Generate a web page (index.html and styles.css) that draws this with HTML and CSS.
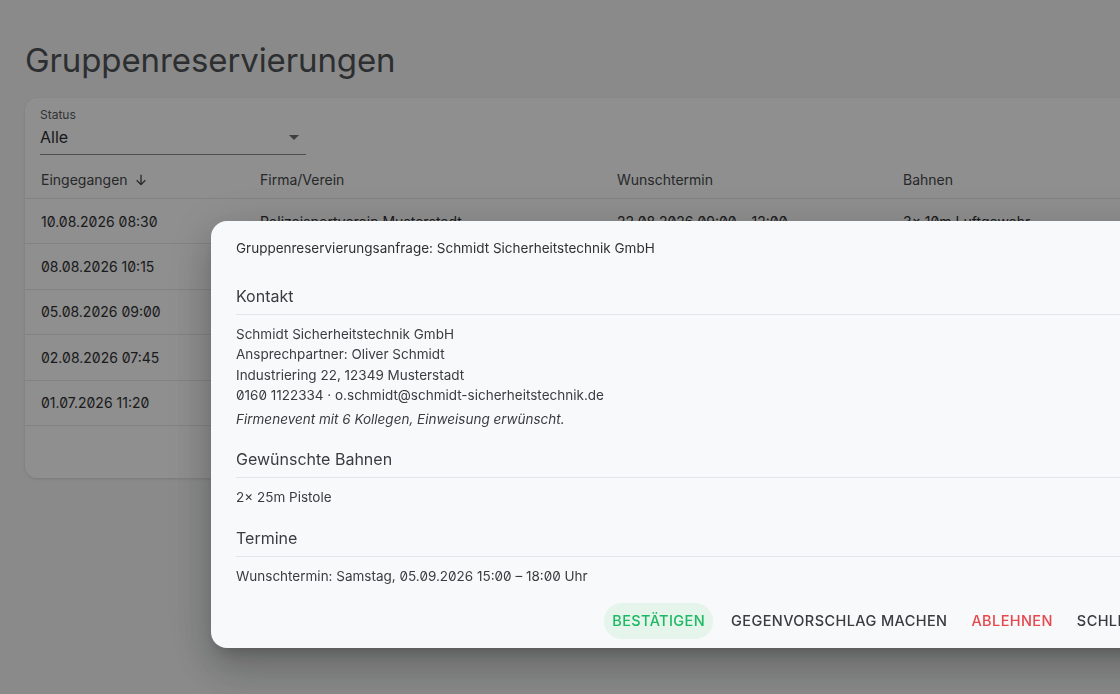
FILE: index.html
```html
<!DOCTYPE html>
<html lang="de">
<head>
<meta charset="utf-8">
<title>Gruppenreservierungen</title>
<link rel="stylesheet" href="styles.css">
</head>
<body>
<div class="page">
  <h1 class="page-title">Gruppenreservierungen</h1>
  <div class="card">
    <div class="filter">
      <div class="select">
        <div class="select-label">Status</div>
        <div class="select-value">Alle<span class="caret"></span></div>
      </div>
    </div>
    <div class="table">
      <div class="row head">
        <div class="cell">Eingegangen <svg class="sort" viewBox="0 0 24 24" width="16" height="16"><path d="M12 4v15M5.5 12.5L12 19l6.5-6.5" fill="none" stroke="currentColor" stroke-width="2"/></svg></div>
        <div class="cell">Firma/Verein</div>
        <div class="cell">Wunschtermin</div>
        <div class="cell">Bahnen</div>
      </div>
      <div class="row">
        <div class="cell">10.08.2026 08:30</div>
        <div class="cell">Polizeisportverein Musterstadt</div>
        <div class="cell">22.08.2026 09:00 – 12:00</div>
        <div class="cell">3× 10m Luftgewehr</div>
      </div>
      <div class="row">
        <div class="cell">08.08.2026 10:15</div>
        <div class="cell">Schützengilde Nord</div>
        <div class="cell">29.08.2026 14:00 – 17:00</div>
        <div class="cell">4× 10m Luftpistole</div>
      </div>
      <div class="row">
        <div class="cell">05.08.2026 09:00</div>
        <div class="cell">Schmidt Sicherheitstechnik GmbH</div>
        <div class="cell">05.09.2026 15:00 – 18:00</div>
        <div class="cell">2× 25m Pistole</div>
      </div>
      <div class="row">
        <div class="cell">02.08.2026 07:45</div>
        <div class="cell">Jagdverein Waldhof</div>
        <div class="cell">12.09.2026 10:00 – 13:00</div>
        <div class="cell">2× 50m Kleinkaliber</div>
      </div>
      <div class="row">
        <div class="cell">01.07.2026 11:20</div>
        <div class="cell">Firmenlauf Team Süd</div>
        <div class="cell">18.07.2026 16:00 – 19:00</div>
        <div class="cell">3× 10m Luftgewehr</div>
      </div>
      <div class="table-foot"></div>
    </div>
  </div>
</div>

<div class="overlay"></div>

<div class="dialog">
  <div class="dialog-title">Gruppenreservierungsanfrage: Schmidt Sicherheitstechnik GmbH</div>
  <div class="section first">
    <div class="section-head">Kontakt</div>
    <div class="section-body">
      <div class="line">Schmidt Sicherheitstechnik GmbH</div>
      <div class="line">Ansprechpartner: Oliver Schmidt</div>
      <div class="line">Industriering 22, 12349 Musterstadt</div>
      <div class="line">0160 1122334 · o.schmidt@schmidt-sicherheitstechnik.de</div>
      <div class="line note">Firmenevent mit 6 Kollegen, Einweisung erwünscht.</div>
    </div>
  </div>
  <div class="section">
    <div class="section-head">Gewünschte Bahnen</div>
    <div class="section-body">
      <div class="line">2× 25m Pistole</div>
    </div>
  </div>
  <div class="section">
    <div class="section-head">Termine</div>
    <div class="section-body">
      <div class="line">Wunschtermin: Samstag, 05.09.2026 15:00 – 18:00 Uhr</div>
    </div>
  </div>
  <div class="actions">
    <button class="btn btn-confirm">Bestätigen</button>
    <button class="btn btn-neutral">Gegenvorschlag machen</button>
    <button class="btn btn-reject">Ablehnen</button>
    <button class="btn btn-neutral">Schließen</button>
  </div>
</div>
</body>
</html>
```

FILE: styles.css
```css
* { box-sizing: border-box; }

html, body {
  margin: 0;
  padding: 0;
  width: 1120px;
  height: 694px;
  overflow: hidden;
}

body {
  background: #f2f3f4;
  font-family: Inter, "Noto Sans", sans-serif;
  font-feature-settings: "zero" 1;
  color: #2b2d2f;
}

.page {
  padding: 38px 0 0 25px;
}

.page-title {
  margin: 0 0 16px 0;
  font-size: 33px;
  font-weight: 400;
  line-height: 44px;
  color: #4e5254;
  letter-spacing: -0.1px;
}

.card {
  width: 1200px;
  background: #fbfbfb;
  border-radius: 12px;
  box-shadow: 0 1px 3px rgba(0,0,0,0.12);
  overflow: hidden;
}

.filter {
  padding: 9px 15px 0 15px;
}

.select {
  width: 266px;
  border-bottom: 1px solid #8a8c8e;
  padding-bottom: 5px;
}

.select-label {
  font-size: 12px;
  line-height: 16px;
  color: #5a5d60;
  margin-bottom: 2px;
}

.select-value {
  display: flex;
  justify-content: space-between;
  align-items: center;
  font-size: 16px;
  line-height: 24px;
  color: #2b2d2f;
  padding-right: 7px;
}

.caret {
  width: 0;
  height: 0;
  border-left: 5px solid transparent;
  border-right: 5px solid transparent;
  border-top: 5px solid #6b6e71;
}

.table {
  margin-top: 6px;
}

.row {
  display: grid;
  grid-template-columns: 219px 357px 286px 1fr;
  border-bottom: 1px solid #e4e5e7;
  height: 45.4px;
  align-items: center;
  font-size: 14px;
  color: #2f3133;
}

.row.head {
  height: 38px;
  color: #45484b;
}

.cell {
  padding-left: 16px;
  display: flex;
  align-items: center;
  white-space: nowrap;
}

.sort {
  margin-left: 5px;
  color: #45484b;
}

.table-foot {
  height: 52px;
}

.overlay {
  position: fixed;
  inset: 0;
  background: rgba(0,0,0,0.43);
}

.dialog {
  position: fixed;
  left: 211px;
  top: 221px;
  width: 992px;
  height: 427px;
  background: #f8f9fa;
  border-radius: 16px;
  box-shadow: 0 11px 15px -7px rgba(0,0,0,0.2), 0 24px 38px 3px rgba(0,0,0,0.14), 0 9px 46px 8px rgba(0,0,0,0.12);
  padding: 16px 24px 0 25px;
  color: #3a3c3f;
}

.dialog-title {
  font-size: 13.5px;
  line-height: 20px;
  color: #2f3133;
  padding-top: 1px;
}

.section {
  margin-top: 18.5px;
}

.section.first {
  margin-top: 26px;
}

.section-head {
  font-size: 16px;
  line-height: 24px;
  color: #3a3c3f;
  padding-bottom: 6px;
  border-bottom: 1px solid #e3e5e8;
}

.section-body {
  padding-top: 9px;
  font-size: 13.5px;
  line-height: 20.3px;
  color: #3a3c3f;
}

.note {
  font-style: italic;
  margin-top: 3.5px;
}

.actions {
  display: flex;
  justify-content: flex-end;
  gap: 8px;
  margin-top: 16px;
}

.btn {
  font-family: Inter, "Noto Sans", sans-serif;
  font-feature-settings: "zero" 1;
  font-size: 14.5px;
  font-weight: 500;
  text-transform: uppercase;
  letter-spacing: 0.4px;
  height: 36px;
  padding: 0 8px;
  border: none;
  border-radius: 18px;
  background: transparent;
  cursor: pointer;
}

.btn-confirm {
  color: #1fb865;
  background: #e5f5eb;
  margin-right: 2px;
}

.btn-neutral {
  color: #3a3c3f;
}

.btn-reject {
  color: #e5484d;
}
```
